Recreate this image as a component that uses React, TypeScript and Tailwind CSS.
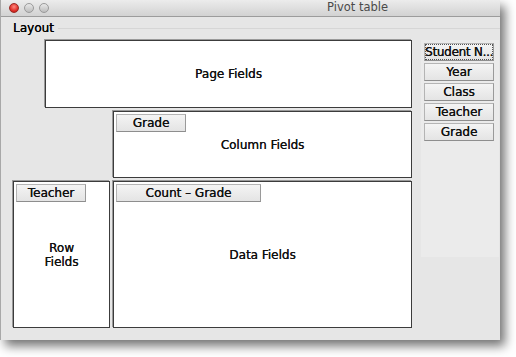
import React from "react";

const font = { fontFamily: '"DejaVu Sans", "Liberation Sans", sans-serif' };

function Btn({ label, focus, className = "" }: { label: string; focus?: boolean; className?: string }) {
  return (
    <div
      className={
        "flex items-center justify-center h-[18px] bg-gradient-to-b from-[#f4f4f4] to-[#e4e4e4] border border-[#b4b4b4] border-b-[#8e8e8e] border-r-[#9a9a9a] text-[12px] leading-none text-[#111] whitespace-nowrap overflow-hidden " +
        className
      }
    >
      <span
        className={
          focus
            ? "outline outline-1 outline-dotted outline-[#555] -outline-offset-1 w-full h-full flex items-center justify-center tracking-[-0.3px]"
            : ""
        }
      >
        {label}
      </span>
    </div>
  );
}

function Box({ children, className = "" }: { children: React.ReactNode; className?: string }) {
  return (
    <div
      className={
        "grid bg-white border border-[#3c3c3c] shadow-[-1px_-1px_0_#9a9a9a] " + className
      }
    >
      {children}
    </div>
  );
}

export default function App() {
  return (
    <div className="w-[516px] h-[357px] bg-white" style={font}>
      <div className="w-[500px] h-[340px] flex flex-col bg-[#e6e6e6] border-l border-[#a8a8a8] shadow-[5px_6px_10px_rgba(0,0,0,0.55)]">
        {/* title bar */}
        <div className="h-[17px] flex items-center bg-gradient-to-b from-[#ececec] to-[#d2d2d2] border-b border-[#9c9c9c]">
          <div className="flex gap-[5px] pl-[8px]">
            <div className="w-[10px] h-[10px] rounded-full bg-[radial-gradient(circle_at_50%_35%,#ff8a80,#e0302a_60%,#a8140f)] border border-[#9a2a24]" />
            <div className="w-[10px] h-[10px] rounded-full bg-gradient-to-b from-[#e8e8e8] to-[#bdbdbd] border border-[#9a9a9a]" />
            <div className="w-[10px] h-[10px] rounded-full bg-gradient-to-b from-[#e8e8e8] to-[#bdbdbd] border border-[#9a9a9a]" />
          </div>
          <div className="pl-[278px] text-[11.5px] text-[#4a4a4a]">Pivot table</div>
        </div>

        {/* group header */}
        <div className="flex items-center h-[20px] mt-[1px] pl-[12px]">
          <span className="text-[12px] text-[#000] [text-shadow:0.3px_0_0_#000]">Layout</span>
          <div className="flex-1 ml-[4px] h-px bg-[#f6f6f6] border-t border-[#d6d6d6]" />
        </div>

        <div className="flex pl-[12px] pt-[2px]">
          <div className="grid grid-cols-[29px_65px_299px] grid-rows-[68px_67px_147px] gap-[3px] text-[12px] text-[#111] [text-shadow:0.25px_0_0_#111]">
            <Box className="col-start-2 col-span-2 row-start-1">
              <div className="col-start-1 row-start-1 flex items-center justify-center">Page Fields</div>
            </Box>
            <Box className="col-start-3 row-start-2">
              <div className="col-start-1 row-start-1 flex items-center justify-center">Column Fields</div>
              <div className="col-start-1 row-start-1 p-[2px]">
                <Btn label="Grade" className="w-[70px]" />
              </div>
            </Box>
            <Box className="col-start-1 col-span-2 row-start-3">
              <div className="col-start-1 row-start-1 flex items-center justify-center text-center leading-[14px]">
                Row
                <br />
                Fields
              </div>
              <div className="col-start-1 row-start-1 p-[2px]">
                <Btn label="Teacher" className="w-[70px]" />
              </div>
            </Box>
            <Box className="col-start-3 row-start-3">
              <div className="col-start-1 row-start-1 flex items-center justify-center">Data Fields</div>
              <div className="col-start-1 row-start-1 p-[2px]">
                <Btn label="Count – Grade" className="w-[145px]" />
              </div>
            </Box>
          </div>

          <div className="ml-[9px] w-[78px] h-[217px] bg-[#ebebeb] flex flex-col gap-[2px] pt-[3px] pl-[3px] pr-[5px] [text-shadow:0.25px_0_0_#111]">
            <Btn label="Student N..." focus />
            <Btn label="Year" />
            <Btn label="Class" />
            <Btn label="Teacher" />
            <Btn label="Grade" />
          </div>
        </div>
      </div>
    </div>
  );
}
